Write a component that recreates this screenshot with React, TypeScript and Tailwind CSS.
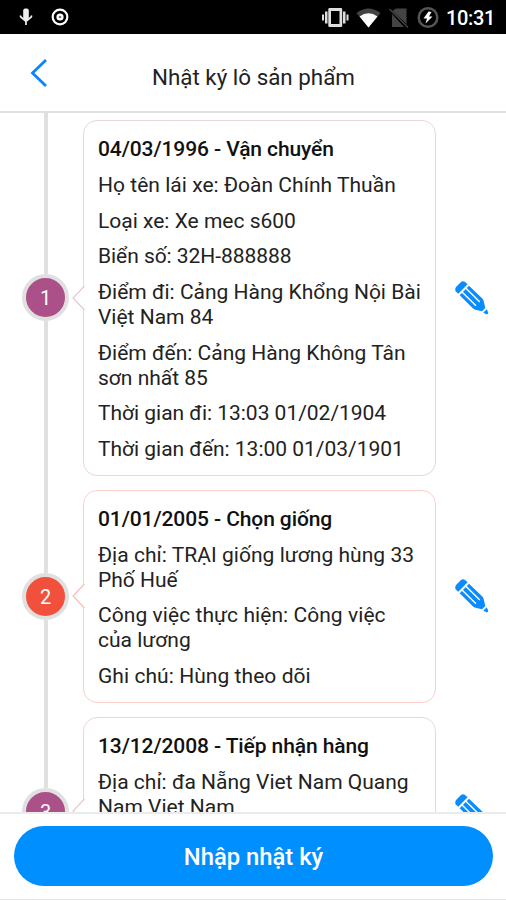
import React from "react";

type Entry = {
  id: number;
  node: string;
  border: string;
  stroke: string;
  height: string;
  padTop: string;
  title: string;
  titleTrack: string;
  rows: { text: string; track: string }[][];
};

const entries: Entry[] = [
  {
    id: 1,
    node: "bg-[#ac5089]",
    border: "border-[#ecd5dc]",
    stroke: "#e6c8d2",
    height: "h-[369.5px]",
    padTop: "pt-[16px]",
    title: "04/03/1996 - Vận chuyển",
    titleTrack: "tracking-[-0.1px]",
    rows: [
      [{ text: "Họ tên lái xe: Đoàn Chính Thuần", track: "tracking-[0.03px]" }],
      [{ text: "Loại xe: Xe mec s600", track: "tracking-[0px]" }],
      [{ text: "Biển số: 32H-888888", track: "tracking-[-0.05px]" }],
      [
        { text: "Điểm đi: Cảng Hàng Khổng Nội Bài", track: "tracking-[0px]" },
        { text: "Việt Nam 84", track: "tracking-[0px]" },
      ],
      [
        { text: "Điểm đến: Cảng Hàng Không Tân", track: "tracking-[0px]" },
        { text: "sơn nhất 85", track: "tracking-[0px]" },
      ],
      [{ text: "Thời gian đi: 13:03 01/02/1904", track: "tracking-[-0.02px]" }],
      [{ text: "Thời gian đến: 13:00 01/03/1901", track: "tracking-[-0.02px]" }],
    ],
  },
  {
    id: 2,
    node: "bg-[#f0503c]",
    border: "border-[#fccfca]",
    stroke: "#f9bdb6",
    height: "h-[227px]",
    padTop: "pt-[16.5px]",
    title: "01/01/2005 - Chọn giống",
    titleTrack: "tracking-[-0.1px]",
    rows: [
      [
        { text: "Địa chỉ: TRẠI giống lương hùng 33", track: "tracking-[0.03px]" },
        { text: "Phố Huế", track: "tracking-[0px]" },
      ],
      [
        { text: "Công việc thực hiện: Công việc", track: "tracking-[0.06px]" },
        { text: "của lương", track: "tracking-[0px]" },
      ],
      [{ text: "Ghi chú: Hùng theo dõi", track: "tracking-[0.06px]" }],
    ],
  },
  {
    id: 3,
    node: "bg-[#ac5089]",
    border: "border-[#ecd5dc]",
    stroke: "#e6c8d2",
    height: "h-[203px]",
    padTop: "pt-[16.5px]",
    title: "13/12/2008 - Tiếp nhận hàng",
    titleTrack: "tracking-[-0.1px]",
    rows: [
      [
        { text: "Địa chỉ: đa Nẵng Viet Nam Quang", track: "tracking-[0px]" },
        { text: "Nam Viet Nam", track: "tracking-[0px]" },
      ],
    ],
  },
];

function Pencil() {
  return (
    <svg viewBox="0 0 34 34" className="h-[34px] w-[34px] shrink-0" fill="#0a8cff">
      <path d="M.8 10.500 Q-.6 8 1.300 5.800 L5.500 1.400 Q7.500-.4 9.800 .8 L12.600 3.300 L3.300 12.800 Z" />
      <path d="M14 4.700 L27.300 17.600 Q28.500 18.800 28.800 20.500 L30.300 27 L27 30.300 L20.500 28.800 Q19 28.400 17.800 27.300 L4.700 14.200 Z" />
      <path d="M7.300 11.300 L20.500 24.300 M11.200 7.500 L24.300 20.500" stroke="#fff" strokeWidth="1.400" strokeLinecap="round" fill="none" />
      <path d="M31.700 28.300 L33.200 31.500 Q33.500 33.500 31.500 33.200 L28.300 31.700 Z" />
    </svg>
  );
}

function StatusBar() {
  return (
    <div className="flex h-[34px] shrink-0 items-center bg-black pl-[19px] pr-[11px]">
      <svg viewBox="0 0 14 18" className="h-[18px] w-[14px]" fill="none" stroke="#eee">
        <rect x="4.200" y="0.500" width="5.600" height="11.500" rx="2" fill="#eee" stroke="none" />
        <path d="M1.300 7.500 L1.800 9 L7 13.500 L12.200 9 L12.700 7.500 M7 13 V17" strokeWidth="1.700" />
      </svg>
      <svg viewBox="0 0 18 18" className="ml-[17.500px] h-[18px] w-[18px]">
        <circle cx="9" cy="9" r="7.300" fill="none" stroke="#fff" strokeWidth="2.200" />
        <circle cx="9" cy="9" r="3.600" fill="#fff" />
        <circle cx="9" cy="9" r="1.300" fill="#777" />
      </svg>
      <svg viewBox="0 0 120 24" className="ml-auto mt-[1px] h-[24px] w-[120px]">
        <g fill="#ddd">
          <rect x="1" y="8.500" width="2" height="6" />
          <rect x="4" y="5.500" width="2.500" height="12" />
          <rect x="22" y="5.500" width="2.500" height="12" />
          <rect x="25.500" y="8.500" width="2" height="6" />
          <path fillRule="evenodd" d="M8.500 2h11.500a1.200 1.200 0 0 1 1.200 1.200v16.600a1.200 1.200 0 0 1-1.200 1.200h-11.500a1.200 1.200 0 0 1-1.200-1.200v-16.600a1.200 1.200 0 0 1 1.200-1.200zM10 5v13h8.500V5z" />
        </g>
        <path d="M35.500 7 Q47.500-2 59.500 7 L47.500 21.500 Z" fill="#444" />
        <path d="M38.500 10.500 Q47.500 4 56.500 10.500 L47.500 21.500 Z" fill="#fff" />
        <path d="M75 2.500 H85.500 V18 L71.500 5 Z M71 8 L83 21 H71 Z" fill="#444" />
        <path d="M68.500 3 L87 21.500" stroke="#444" strokeWidth="1.500" />
        <circle cx="107" cy="11.500" r="9.300" fill="none" stroke="#555" strokeWidth="2.500" />
        <path d="M107.500 5.500 L102.500 12.500 H106 L104.500 17.500 L111.500 10.500 H108 L110.500 6 Z" fill="#fff" />
      </svg>
      <span className="ml-[5px] mt-[1px] w-[49px] whitespace-nowrap text-[20px] font-medium leading-none tracking-[-0.35px] text-white">10:31</span>
    </div>
  );
}

function TimelineRow({ entry }: { entry: Entry }) {
  return (
    <div className={`flex shrink-0 ${entry.height}`}>
      <div className="ml-[22px] flex w-[47px] flex-col items-center">
        <div className="w-[4px] flex-1 bg-[#e0e0e0]" />
        <div className={`flex h-[47px] w-[47px] shrink-0 items-center justify-center rounded-full border-4 border-[#e0e0e0] pt-[1px] text-[20px] text-white ${entry.node}`}>
          {entry.id}
        </div>
        <div className="w-[4px] flex-1 bg-[#e0e0e0]" />
      </div>
      <div className="ml-[14px] flex w-[353px] py-[7px]">
        <div className={`relative w-full rounded-[14px] border-[1.5px] pl-[14px] ${entry.padTop} ${entry.border}`}>
          <svg viewBox="0 0 13 26" className="absolute top-1/2 -left-[12px] h-[26px] w-[13px] -translate-y-1/2">
            <path d="M13 1 L1 13 L13 25 Z" fill="#fff" />
            <path d="M12.500 1 L1 13 L12.500 25" fill="none" stroke={entry.stroke} strokeWidth="1.200" />
          </svg>
          <div className="flex flex-col gap-[11px] whitespace-nowrap text-[21px] leading-[24.800px] text-[#222]">
            <div className="font-medium text-[#111]">
              <span className={entry.titleTrack}>{entry.title}</span>
            </div>
            {entry.rows.map((row, i) => (
              <div key={i}>
                {row.map((line) => (
                  <div key={line.text}>
                    <span className={line.track}>{line.text}</span>
                  </div>
                ))}
              </div>
            ))}
          </div>
        </div>
      </div>
      <div className="ml-[19px] flex items-center">
        <Pencil />
      </div>
    </div>
  );
}

export default function App() {
  return (
    <div className="flex h-[900px] w-[506px] flex-col overflow-hidden bg-white font-['Roboto',sans-serif]">
      <StatusBar />
      <header className="flex h-[79px] shrink-0 items-center border-b-2 border-[#e0e0e0]">
        <svg viewBox="0 0 18 30" className="ml-[30px] h-[30px] w-[18px]">
          <path d="M16 2 L2.500 15 L16 28" fill="none" stroke="#0a84ff" strokeWidth="2.800" />
        </svg>
        <h1 className="ml-[104px] mt-[8px] whitespace-nowrap text-[22.400px] leading-[26px] text-[#222]">Nhật ký lô sản phẩm</h1>
      </header>
      <main className="flex min-h-0 flex-1 flex-col overflow-hidden">
        {entries.map((e) => (
          <TimelineRow key={e.id} entry={e} />
        ))}
      </main>
      <footer className="flex h-[88px] shrink-0 flex-col border-t-2 border-b border-t-[#ebebeb] border-b-[#e5e5e5] px-[14px] pt-[12px]">
        <button className="h-[60px] w-[479px] rounded-full bg-[#008fff] pt-[3px] text-[23.800px] font-medium text-white">
          Nhập nhật ký
        </button>
      </footer>
    </div>
  );
}
